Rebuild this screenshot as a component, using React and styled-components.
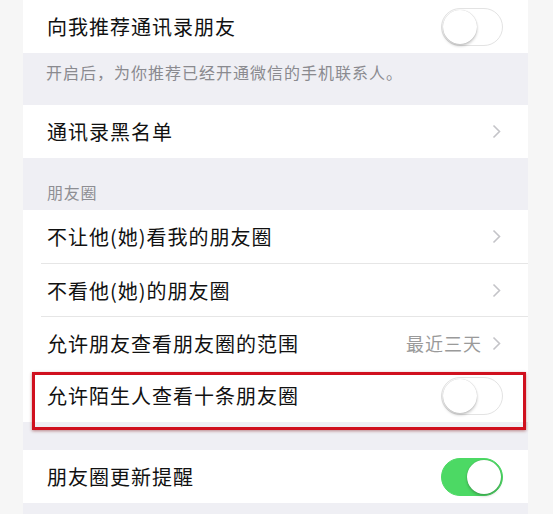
import React from "react";
import styled, { createGlobalStyle, css } from "styled-components";

const GlobalStyle = createGlobalStyle`
  html, body { margin: 0; padding: 0; background: #f6f6f6; }
  body { font-family: "Noto Sans CJK SC", "Noto Sans", sans-serif; }
`;

const Page = styled.div`
  width: 553px;
  height: 514px;
  overflow: hidden;
  background: #f6f6f6;
  padding-left: 23px;
  box-sizing: border-box;
`;

const Panel = styled.div`
  width: 505px;
  min-height: 514px;
  background: #efeff4;
  display: flex;
  flex-direction: column;
`;

const Group = styled.div`
  background: #fff;
  display: flex;
  flex-direction: column;
`;

// rows after the first in a group get an inset hairline on top
const Row = styled.div`
  position: relative;
  height: 53px;
  display: flex;
  align-items: center;
  padding: 0 25px 0 24px;
  box-sizing: border-box;

  ${(p) =>
    p.$divider &&
    css`
      border-top: 1px solid #e6e6e6;
      margin-left: 18px;
      padding-left: 6px;
    `}
`;

const Label = styled.span`
  flex: 1;
  font-size: 20px;
  color: #111;
  letter-spacing: 1px;
  white-space: nowrap;
`;

const Value = styled.span`
  font-size: 18px;
  color: #9a9a9a;
  letter-spacing: 1px;
  margin-right: 10px;
`;

const Note = styled.div`
  height: 52px;
  padding: 7px 0 0 23px;
  box-sizing: border-box;
  font-size: 16px;
  letter-spacing: 1px;
  color: #8a8a8f;
`;

const SectionTitle = styled.div`
  height: 52px;
  display: flex;
  align-items: flex-end;
  padding: 0 0 6px 24px;
  box-sizing: border-box;
  font-size: 16px;
  letter-spacing: 0.8px;
  color: #8e8e93;
`;

const Gap = styled.div`
  height: ${(p) => p.$h}px;
`;

const Switch = styled.div`
  width: 62px;
  height: 38px;
  border-radius: 19px;
  box-sizing: border-box;
  background: ${(p) => (p.$on ? "#4cd964" : "#fff")};
  border: 1.5px solid ${(p) => (p.$on ? "#4cd964" : "#e3e3e3")};
  display: flex;
  align-items: center;
  justify-content: ${(p) => (p.$on ? "flex-end" : "flex-start")};
  padding: 0 1px;

  &::after {
    content: "";
    width: 34px;
    height: 34px;
    border-radius: 50%;
    background: #fff;
    box-shadow: 0 2px 3px rgba(0, 0, 0, 0.22), 0 0 1px rgba(0, 0, 0, 0.25);
  }
`;

const Mark = styled.div`
  position: absolute;
  top: 3px;
  bottom: -8px;
  left: 9px;
  right: 2px;
  border: 3px solid #d0101e;
  box-shadow: 0 1px 3px rgba(120, 0, 0, 0.45);
  pointer-events: none;
`;

const Chevron = () => (
  <svg width="9" height="15" viewBox="0 0 9 15" style={{ marginRight: 2 }}>
    <path d="M1.5 1.5 L7.5 7.5 L1.5 13.5" fill="none" stroke="#c4c4c8" strokeWidth="1.6" />
  </svg>
);

export default function App() {
  return (
    <>
      <GlobalStyle />
      <Page>
        <Panel>
          <Group>
            <Row>
              <Label>向我推荐通讯录朋友</Label>
              <Switch />
            </Row>
          </Group>
          <Note>开启后，为你推荐已经开通微信的手机联系人。</Note>
          <Group>
            <Row>
              <Label>通讯录黑名单</Label>
              <Chevron />
            </Row>
          </Group>
          <SectionTitle>朋友圈</SectionTitle>
          <Group>
            <Row>
              <Label>不让他(她)看我的朋友圈</Label>
              <Chevron />
            </Row>
            <Row $divider>
              <Label>不看他(她)的朋友圈</Label>
              <Chevron />
            </Row>
            <Row $divider>
              <Label>允许朋友查看朋友圈的范围</Label>
              <Value>最近三天</Value>
              <Chevron />
            </Row>
            <Row>
              <Label>允许陌生人查看十条朋友圈</Label>
              <Switch />
              <Mark />
            </Row>
          </Group>
          <Gap $h={28} />
          <Group>
            <Row>
              <Label>朋友圈更新提醒</Label>
              <Switch $on />
            </Row>
          </Group>
        </Panel>
      </Page>
    </>
  );
}
